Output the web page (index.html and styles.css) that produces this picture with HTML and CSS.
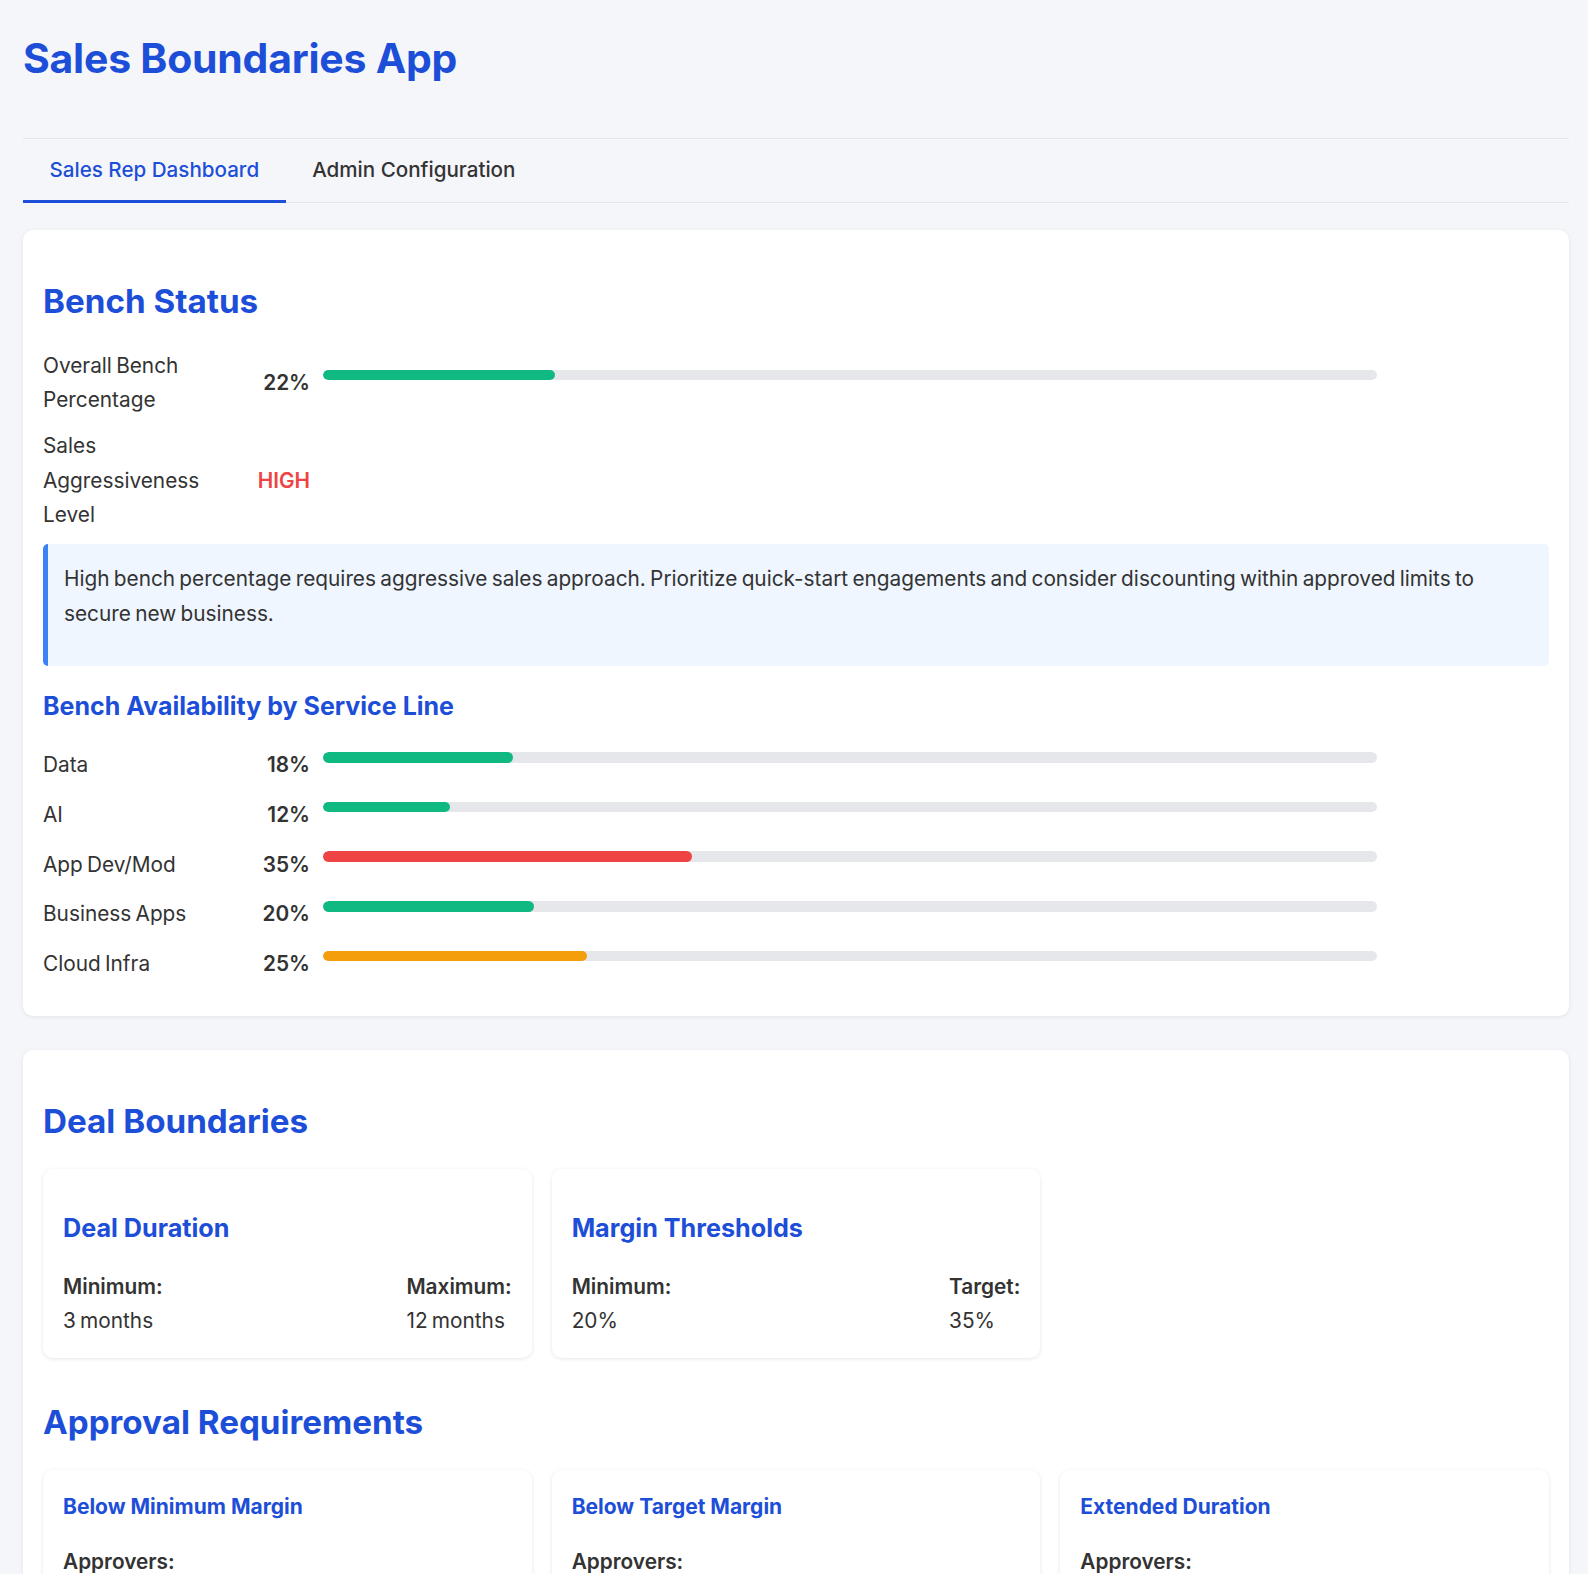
FILE: index.html
```html
<!DOCTYPE html>
<html lang="en">
<head>
<meta charset="utf-8">
<title>Sales Boundaries App</title>
<link rel="stylesheet" href="styles.css">
</head>
<body>
<div class="app">
  <h1 class="app-title">Sales Boundaries App</h1>

  <nav class="tabs">
    <button class="tab active">Sales Rep Dashboard</button>
    <button class="tab">Admin Configuration</button>
  </nav>

  <section class="card">
    <h2 class="card-title">Bench Status</h2>

    <div class="stat-row">
      <span class="stat-label">Overall Bench Percentage</span>
      <span class="stat-value">22%</span>
      <div class="bar-wrap"><div class="bar"><div class="fill green" style="width:22%"></div></div></div>
    </div>
    <div class="stat-row">
      <span class="stat-label">Sales Aggressiveness Level</span>
      <span class="stat-value high">HIGH</span>
    </div>

    <div class="info">
      <p>High bench percentage requires aggressive sales approach. Prioritize quick-start engagements and consider discounting within approved limits to secure new business.</p>
    </div>

    <h3 class="section-title">Bench Availability by Service Line</h3>

    <div class="stat-row service">
      <span class="stat-label">Data</span>
      <span class="stat-value">18%</span>
      <div class="bar-wrap"><div class="bar"><div class="fill green" style="width:18%"></div></div></div>
    </div>
    <div class="stat-row service">
      <span class="stat-label">AI</span>
      <span class="stat-value">12%</span>
      <div class="bar-wrap"><div class="bar"><div class="fill green" style="width:12%"></div></div></div>
    </div>
    <div class="stat-row service">
      <span class="stat-label">App Dev/Mod</span>
      <span class="stat-value">35%</span>
      <div class="bar-wrap"><div class="bar"><div class="fill red" style="width:35%"></div></div></div>
    </div>
    <div class="stat-row service">
      <span class="stat-label">Business Apps</span>
      <span class="stat-value">20%</span>
      <div class="bar-wrap"><div class="bar"><div class="fill green" style="width:20%"></div></div></div>
    </div>
    <div class="stat-row service">
      <span class="stat-label">Cloud Infra</span>
      <span class="stat-value">25%</span>
      <div class="bar-wrap"><div class="bar"><div class="fill orange" style="width:25%"></div></div></div>
    </div>
  </section>

  <section class="card">
    <h2 class="card-title">Deal Boundaries</h2>
    <div class="grid3 deal-grid">
      <div class="sub-card">
        <h3 class="sub-title">Deal Duration</h3>
        <div class="pair">
          <div><div class="key">Minimum:</div><div>3 months</div></div>
          <div><div class="key">Maximum:</div><div>12 months</div></div>
        </div>
      </div>
      <div class="sub-card">
        <h3 class="sub-title">Margin Thresholds</h3>
        <div class="pair">
          <div><div class="key">Minimum:</div><div>20%</div></div>
          <div><div class="key">Target:</div><div>35%</div></div>
        </div>
      </div>
    </div>

    <h2 class="card-title">Approval Requirements</h2>
    <div class="grid3">
      <div class="sub-card approval">
        <h4 class="approval-title">Below Minimum Margin</h4>
        <div class="key">Approvers:</div>
      </div>
      <div class="sub-card approval">
        <h4 class="approval-title">Below Target Margin</h4>
        <div class="key">Approvers:</div>
      </div>
      <div class="sub-card approval">
        <h4 class="approval-title">Extended Duration</h4>
        <div class="key">Approvers:</div>
      </div>
    </div>
  </section>
</div>
</body>
</html>
```

FILE: styles.css
```css
* { box-sizing: border-box; }

html, body {
  margin: 0;
  background: #f5f6fa;
}

body {
  font-family: Inter, "Noto Sans", "Liberation Sans", sans-serif;
  font-size: 20.8px;
  line-height: 34.2px;
  word-spacing: -1.6px;
  color: #333333;
}

.app {
  padding: 23.5px 19px 40px 23px;
}

.app-title {
  margin: 0 0 46px;
  font-size: 40.9px;
  line-height: 68px;
  font-weight: 700;
  color: #1d4ed8;
  letter-spacing: -0.2px;
  word-spacing: 0;
}

/* Tabs */
.tabs {
  display: flex;
  border-top: 1px solid #e3e5ea;
  border-bottom: 1px solid #e3e5ea;
  margin-bottom: 27px;
}

.tab {
  font: inherit;
  font-size: 20.6px;
  font-weight: 500;
  word-spacing: 0;
  color: #333333;
  background: none;
  border: none;
  border-bottom: 3px solid transparent;
  margin-bottom: -1px;
  padding: 14px 26.5px 13px;
  cursor: pointer;
}

.tab.active {
  color: #1d4ed8;
  border-bottom-color: #1d4ed8;
}

/* Cards */
.card {
  background: #ffffff;
  border-radius: 10px;
  box-shadow: 0 1px 4px rgba(0, 0, 0, 0.08);
  padding: 20px;
  margin-bottom: 34px;
}

.card-title {
  margin: 23px 0 20px;
  font-size: 33.2px;
  line-height: 56px;
  font-weight: 700;
  word-spacing: 0;
  color: #1d4ed8;
}

/* Stat rows */
.stat-row {
  display: flex;
  align-items: center;
  margin-bottom: 12.3px;
}

.stat-row.service {
  margin-bottom: 15.4px;
}

.stat-label {
  flex: 0 0 202px;
  padding-right: 8px;
}

.stat-value {
  flex: 0 0 65px;
  text-align: right;
  font-weight: 600;
}

.stat-value.high {
  color: #ef4444;
}

.bar-wrap {
  width: 70%;
  margin-left: 13px;
  padding-bottom: 16px;
}

.bar {
  height: 10.7px;
  background: #e5e7eb;
  border-radius: 6px;
  overflow: hidden;
}

.fill {
  height: 100%;
  border-radius: 6px;
}

.fill.green { background: #10b981; }
.fill.red { background: #ef4444; }
.fill.orange { background: #f59e0b; }

/* Info box */
.info {
  background: #eff6ff;
  border-left: 5px solid #3b82f6;
  border-radius: 5px;
  padding: 18px 16px 16px;
}

.info p {
  margin: 0 0 19px;
}

.section-title {
  margin: 19px 0 21px;
  font-size: 25px;
  line-height: 42.7px;
  font-weight: 700;
  word-spacing: 0;
  color: #1d4ed8;
}

/* Grids */
.grid3 {
  display: grid;
  grid-template-columns: repeat(3, 1fr);
  gap: 20px;
}

.deal-grid {
  margin-bottom: 36px;
}

.sub-card {
  background: #ffffff;
  border-radius: 10px;
  box-shadow: 0 1px 4px rgba(0, 0, 0, 0.1);
  padding: 20px;
}

.sub-card.approval {
  padding-top: 20.5px;
}

.sub-title {
  margin: 17.5px 0 20px;
  font-size: 25.2px;
  line-height: 42.7px;
  font-weight: 700;
  word-spacing: 0;
  color: #1d4ed8;
}

.pair {
  display: flex;
  justify-content: space-between;
}

.key {
  font-weight: 600;
}

.approval-title {
  margin: 0 0 22px;
  font-size: 21px;
  line-height: 32px;
  font-weight: 700;
  word-spacing: 0;
  color: #1d4ed8;
}
```
